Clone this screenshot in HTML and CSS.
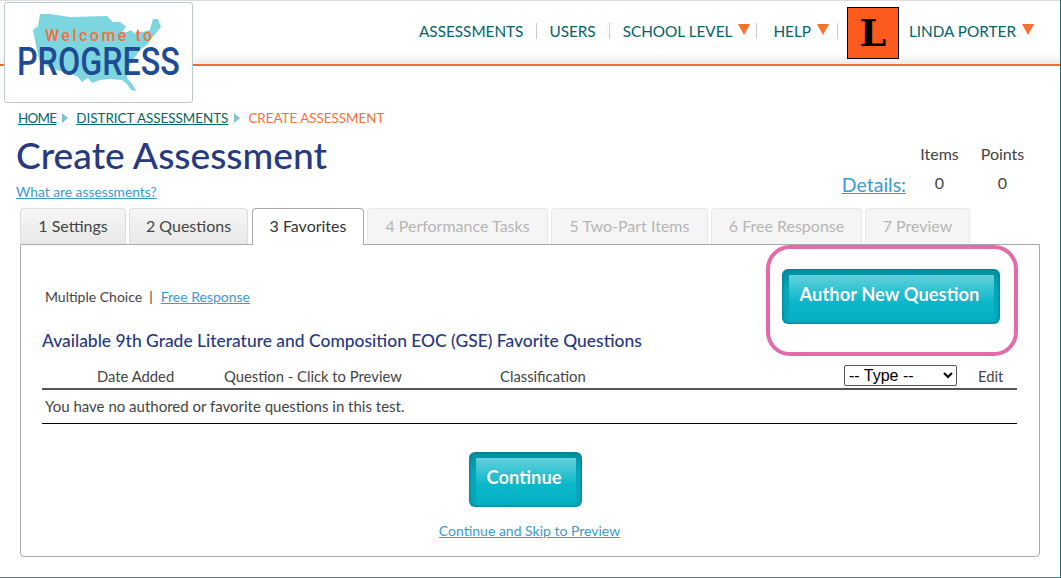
FILE: index.html
```html
<!DOCTYPE html>
<html lang="en">
<head>
    <meta charset="UTF-8">
    <meta name="viewport" content="width=device-width, initial-scale=1.0">
    <title>Create Assessment</title>
    <link rel="stylesheet" href="styles.css">
</head>
<body>
    <div class="page">
        <header class="navbar">
            <a class="logo" href="#">
                <svg class="logo-map" width="189" height="101" viewBox="0 0 189 101">
                    <polygon fill="#7dd5e0" points="36,12 46,12 66,15 103,14 109,20 116,20 120,23 122,25 118,30 123,30 127,28 131,32 146,28 149,17 154,17 157,25 152,31 146,38 144,42 136,48 129,58 124,66 123,76 129,83 132,89 127,88 123,82 118,78 106,77 96,78 88,81 84,76 78,80 74,75 64,70 56,69 46,66 36,60 33,48 29,28 34,24"/>
                </svg>
                <span class="logo-welcome">Welcome to</span>
                <span class="logo-name">PROGRESS</span>
            </a>
            <ul class="nav-links">
                <li><a href="#">ASSESSMENTS</a></li>
                <li><a href="#">USERS</a></li>
                <li><a href="#">SCHOOL LEVEL</a><span class="caret"></span></li>
                <li><a href="#">HELP</a><span class="caret"></span></li>
            </ul>
            <div class="avatar">L</div>
            <div class="user"><a href="#">LINDA PORTER</a><span class="caret"></span></div>
        </header>

        <div class="breadcrumb">
            <a class="crumb-home" href="#">HOME</a>
            <span class="crumb-arrow"></span>
            <a href="#">DISTRICT ASSESSMENTS</a>
            <span class="crumb-arrow"></span>
            <span class="crumb-current">CREATE ASSESSMENT</span>
        </div>

        <div class="title-row">
            <div class="title-left">
                <h1>Create Assessment</h1>
                <a class="help-link" href="#">What are assessments?</a>
            </div>
            <div class="stats">
                <span></span>
                <span class="stat">Items</span>
                <span class="stat">Points</span>
                <a class="details" href="#">Details:</a>
                <span class="stat">0</span>
                <span class="stat">0</span>
            </div>
        </div>

        <div class="tabs">
            <div class="tab tab-1">1 Settings</div>
            <div class="tab tab-2">2 Questions</div>
            <div class="tab tab-3 active">3 Favorites</div>
            <div class="tab tab-4 disabled">4 Performance Tasks</div>
            <div class="tab tab-5 disabled">5 Two-Part Items</div>
            <div class="tab tab-6 disabled">6 Free Response</div>
            <div class="tab tab-7 disabled">7 Preview</div>
        </div>

        <div class="panel">
            <div class="panel-top">
                <div class="filter">
                    Multiple Choice<span class="pipe">|</span><a href="#">Free Response</a>
                </div>
                <button class="btn btn-author">Author New Question</button>
            </div>
            <h2>Available 9th Grade Literature and Composition EOC (GSE) Favorite Questions</h2>
            <div class="table-head">
                <span class="col-date">Date Added</span>
                <span>Question - Click to Preview</span>
                <span>Classification</span>
                <select class="type-select">
                    <option>-- Type --</option>
                </select>
                <span class="col-edit">Edit</span>
            </div>
            <div class="table-row">You have no authored or favorite questions in this test.</div>
            <div class="actions">
                <button class="btn btn-continue">Continue</button>
                <a class="skip-link" href="#">Continue and Skip to Preview</a>
            </div>
        </div>

        <div class="callout"></div>
    </div>
</body>
</html>
```

FILE: styles.css
```css
* {
    box-sizing: border-box;
}
html, body {
    margin: 0;
    padding: 0;
    background: white;
}
body {
    font-family: "Lato", "Noto Sans", sans-serif;
    font-size: 14px;
    color: #444;
}
.page {
    position: relative;
    width: 1061px;
    height: 578px;
    overflow: hidden;
    border-right: 1px solid #1d6d70;
    border-bottom: 1px solid #3a8a80;
}

/* header */
.navbar {
    display: flex;
    align-items: center;
    height: 66px;
    padding: 0 0 4px 419px;
    border-top: 1px solid #ddd;
    border-bottom: 2px solid #f26c2a;
    background: linear-gradient(to bottom, white 82%, #ececec 100%);
}
.logo {
    position: absolute;
    left: 4px;
    top: 2px;
    width: 189px;
    height: 101px;
    background: white;
    border: 1px solid #bccacd;
    border-radius: 3px;
    text-decoration: none;
    z-index: 10;
}
.logo-map {
    position: absolute;
    left: -1px;
    top: -1px;
}
.logo-welcome {
    position: absolute;
    left: 40px;
    top: 23px;
    font-family: "Roboto", sans-serif;
    font-size: 16px;
    font-weight: 500;
    letter-spacing: 2.5px;
    color: #f4703a;
    white-space: nowrap;
}
.logo-name {
    position: absolute;
    left: 12px;
    top: 38px;
    font-family: "Roboto", sans-serif;
    font-size: 38px;
    line-height: 42px;
    font-weight: 500;
    color: #1d4c94;
    transform: scaleX(0.85);
    transform-origin: left center;
    white-space: nowrap;
}
.nav-links {
    display: flex;
    list-style: none;
    margin: 0;
    padding: 0;
}
.nav-links li {
    display: flex;
    align-items: center;
    height: 16px;
    padding-right: 13px;
    margin-right: 13px;
    border-right: 1px solid #c9c9c9;
}
.nav-links a, .user a {
    color: #00646b;
    font-size: 15.3px;
    text-decoration: none;
    white-space: nowrap;
}
.caret {
    width: 0;
    height: 0;
    margin-left: 6px;
    margin-top: -3px;
    border-left: 6px solid transparent;
    border-right: 6px solid transparent;
    border-top: 11px solid #f9702c;
}
.nav-links li:nth-child(1) {
    margin-right: 12px;
}
.nav-links li:nth-child(3) {
    padding-right: 6px;
    margin-right: 16px;
}
.nav-links li:nth-child(4) {
    padding-right: 8px;
    margin-right: 9px;
}
.avatar {
    width: 52px;
    height: 52px;
    margin-top: 4px;
    background: #fd5a1e;
    border: 1px solid black;
    color: black;
    font-family: "DejaVu Serif", serif;
    font-weight: bold;
    font-size: 38px;
    line-height: 50px;
    text-align: center;
}
.user {
    display: flex;
    align-items: center;
    margin-left: 10px;
}

/* breadcrumb and title */
.breadcrumb {
    display: flex;
    align-items: center;
    height: 18px;
    margin: 43px 0 0 18px;
    font-size: 13.4px;
}
.breadcrumb a {
    color: #00646b;
}
.crumb-home {
    letter-spacing: -0.7px;
}
.crumb-arrow {
    width: 0;
    height: 0;
    margin: 0 8px 0 6px;
    border-top: 5px solid transparent;
    border-bottom: 5px solid transparent;
    border-left: 6px solid #82c3cd;
}
.crumb-current {
    color: #f9703a;
}
.title-row {
    display: flex;
    justify-content: space-between;
    padding: 0 26px 0 16px;
}
h1 {
    margin: 6px 0 0;
    font-size: 37.2px;
    line-height: 44px;
    font-weight: 500;
    color: #27397f;
}
.help-link {
    display: block;
    margin-top: 6px;
    font-size: 13.8px;
    line-height: 18px;
    color: #3a9bd0;
}
.stats {
    display: grid;
    grid-template-columns: auto 63px 63px;
    grid-auto-rows: 29px;
    align-items: center;
    margin-top: 12px;
}
.stat {
    text-align: center;
    font-size: 16px;
}
.details {
    font-size: 19.5px;
    color: #3a9bd0;
    margin: 3px 2px 0 0;
}

/* tabs */
.tabs {
    display: flex;
    margin: 7px 0 0 20px;
    height: 36px;
    position: relative;
    z-index: 2;
}
.tab {
    height: 36px;
    margin-right: 3px;
    border: 1px solid #ddd;
    border-bottom: none;
    border-radius: 4px 4px 0 0;
    background: linear-gradient(to bottom, #f6f6f6, #e8e8e8);
    font-size: 16px;
    line-height: 34px;
    text-align: center;
    white-space: nowrap;
}
.tab.active {
    height: 37px;
    background: white;
    border-color: #aaa;
    color: #333;
}
.tab.disabled {
    background: #f5f5f5;
    border-color: #e8e8e8;
    color: #b5b5b5;
}
.tab-1 { width: 106px; margin-right: 3px; }
.tab-2 { width: 119px; margin-right: 4px; }
.tab-3 { width: 112px; margin-right: 3px; }
.tab-4 { width: 181px; }
.tab-5 { width: 157px; }
.tab-6 { width: 151px; }
.tab-7 { width: 105px; }

/* main panel */
.panel {
    width: 1020px;
    height: 313px;
    margin-left: 20px;
    padding: 0 22px 0 21px;
    border: 1px solid #aaa;
    border-radius: 0 0 4px 4px;
}
.panel-top {
    display: flex;
    justify-content: space-between;
    align-items: center;
    padding: 24px 17px 0 3px;
}
.filter a {
    color: #3a9bd0;
}
.pipe {
    margin: 0 8px 0 7px;
}
.btn {
    display: block;
    border: none;
    border-radius: 6px;
    height: 55px;
    padding: 0 3px 6px 0;
    color: white;
    font-family: "Lato", sans-serif;
    font-size: 18.4px;
    font-weight: bold;
    background:
        linear-gradient(to bottom, #62d1db 0, #0ab6ca 50%, #03aec3 100%) no-repeat center 6px / calc(100% - 13px) 100%,
        linear-gradient(to bottom, #008d9f 0, #03a7ba 35%, #03a9bc 100%);
    box-shadow: inset 0 0 3px 1px #00808f;
    text-shadow: 0 0 1px rgba(0, 0, 0, 0.2);
}
.btn-author {
    width: 218px;
}
.btn-continue {
    width: 113px;
    margin-right: 8px;
}
h2 {
    margin: 7px 0 0;
    font-size: 17.45px;
    line-height: 20px;
    font-weight: 500;
    color: #27397f;
}
.table-head {
    display: grid;
    grid-template-columns: 182px 276px 344px 134px 1fr;
    align-items: center;
    height: 26px;
    margin-top: 13px;
    border-bottom: 2px solid #555;
    padding-bottom: 1px;
}
.table-head span {
    font-size: 14.8px;
}
.col-date {
    padding-left: 55px;
}
.type-select {
    width: 113px;
    height: 21px;
    font-family: "Liberation Sans", sans-serif;
    font-size: 16px;
    color: black;
    background: white;
    border: 1px solid #555;
    border-radius: 2px;
}
.table-row {
    height: 34px;
    padding: 7px 0 0 3px;
    border-bottom: 1px solid black;
    font-size: 15px;
}
.actions {
    display: flex;
    flex-direction: column;
    align-items: center;
    margin-top: 28px;
}
.skip-link {
    margin-top: 15px;
    color: #3a9bd0;
    font-size: 14px;
}

/* pink highlight drawn on top of the screenshot */
.callout {
    position: absolute;
    left: 766px;
    top: 245px;
    width: 252px;
    height: 111px;
    border: 4px solid #e46aa9;
    border-radius: 24px;
    pointer-events: none;
}
```
